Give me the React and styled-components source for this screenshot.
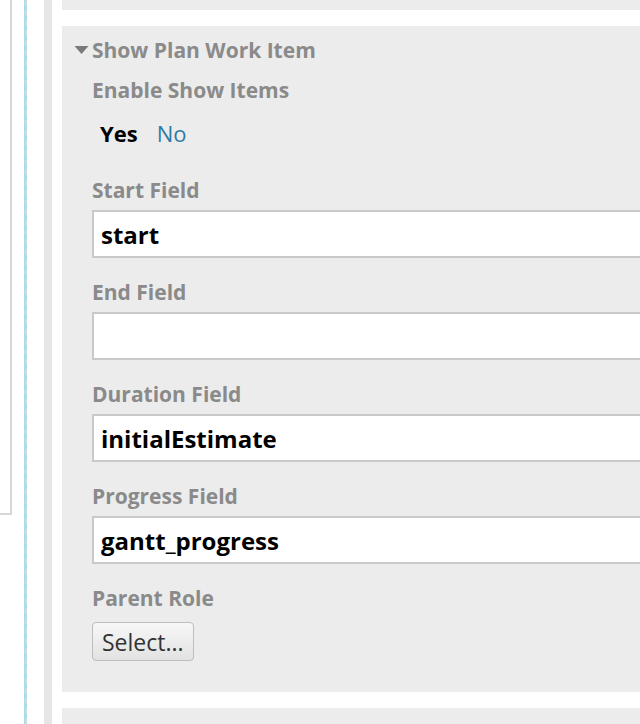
import React, { useState } from "react";
import styled, { createGlobalStyle } from "styled-components";

const GlobalStyle = createGlobalStyle`
  html, body {
    margin: 0;
    padding: 0;
    background: #ffffff;
    overflow: hidden;
  }
  body {
    font-family: "Open Sans", "Noto Sans", sans-serif;
  }
`;

export default function App() {
  const [enabled, setEnabled] = useState(true);

  const fields = [
    { label: "Start Field", value: "start" },
    { label: "End Field", value: "" },
    { label: "Duration Field", value: "initialEstimate" },
    { label: "Progress Field", value: "gantt_progress" },
  ];

  return (
    <>
      <GlobalStyle />
      <Page>
        <LeftColumn>
          <OuterBox />
        </LeftColumn>
        <DashedDivider />
        <Gutter>
          <GutterBar />
        </Gutter>
        <Content>
          <TopPanel />
          <Panel>
            <Header>
              <Caret viewBox="0 0 14 8" aria-hidden="true">
                <path d="M0 0 L14 0 L7 8 Z" fill="#7a7a7a" />
              </Caret>
              Show Plan Work Item
            </Header>
            <Body>
              <Label>Enable Show Items</Label>
              <Toggle>
                <ToggleOption active={enabled} onClick={() => setEnabled(true)}>
                  Yes
                </ToggleOption>
                <ToggleOption active={!enabled} onClick={() => setEnabled(false)}>
                  No
                </ToggleOption>
              </Toggle>
              {fields.map((f) => (
                <Field key={f.label}>
                  <Label>{f.label}</Label>
                  <TextInput defaultValue={f.value} />
                </Field>
              ))}
              <Field>
                <Label>Parent Role</Label>
                <SelectButton>Select...</SelectButton>
              </Field>
            </Body>
          </Panel>
          <BottomPanel />
        </Content>
      </Page>
    </>
  );
}

const Page = styled.div`
  display: flex;
  width: 640px;
  height: 724px;
  overflow: hidden;
`;

const LeftColumn = styled.div`
  width: 24px;
  flex-shrink: 0;
`;

const OuterBox = styled.div`
  width: 10px;
  height: 513px;
  border-right: 2px solid #d6d6d6;
  border-bottom: 2px solid #d6d6d6;
`;

const DashedDivider = styled.div`
  width: 1px;
  flex-shrink: 0;
  background: #a8dcec;
  border-right: 2px dashed #cfd8db;
`;

const Gutter = styled.div`
  display: flex;
  width: 35px;
  flex-shrink: 0;
  padding-left: 17px;
  box-sizing: border-box;
`;

const GutterBar = styled.div`
  width: 8px;
  background: #e6e6e6;
`;

const Content = styled.div`
  display: flex;
  flex-direction: column;
  gap: 16px;
  flex: 1;
  min-width: 0;
`;

const TopPanel = styled.div`
  height: 10px;
  background: #ececec;
`;

const BottomPanel = styled.div`
  flex: 1;
  background: #ececec;
`;

const Panel = styled.div`
  background: #ececec;
  padding: 10px 0 31px 12px;
`;

const Header = styled.div`
  display: flex;
  align-items: center;
  gap: 3px;
  height: 28px;
  font-size: 21px;
  font-weight: 700;
  color: #8a8a8a;
  white-space: nowrap;
`;

const Caret = styled.svg`
  width: 15px;
  height: 8px;
`;

const Body = styled.div`
  padding-left: 18px;
  margin-top: 12px;
`;

const Label = styled.div`
  height: 28px;
  line-height: 28px;
  font-size: 21px;
  font-weight: 700;
  color: #8a8a8a;
  white-space: nowrap;
`;

const Toggle = styled.div`
  display: flex;
  gap: 19px;
  height: 30px;
  align-items: center;
  padding-left: 8px;
  margin: 14px 0 28px;
`;

const ToggleOption = styled.span`
  font-size: 22px;
  font-weight: ${({ active }) => (active ? 700 : 400)};
  color: ${({ active }) => (active ? "#000000" : "#2e7ba6")};
  cursor: pointer;
`;

const Field = styled.div`
  display: flex;
  flex-direction: column;
  align-items: flex-start;
  gap: 6px;
  margin-bottom: 20px;

  &:last-child {
    margin-bottom: 0;
  }
`;

const TextInput = styled.input`
  box-sizing: border-box;
  width: 620px;
  height: 48px;
  border: 2px solid #c9c9c9;
  background: #ffffff;
  padding: 0 7px;
  font-family: inherit;
  font-size: 24px;
  font-weight: 700;
  color: #000000;
  outline: none;
`;

const SelectButton = styled.button`
  box-sizing: border-box;
  height: 39px;
  margin-top: 4px;
  padding: 0 9px;
  border: 1px solid #bdbdbd;
  border-radius: 4px;
  background: linear-gradient(#f7f7f7, #e2e2e2);
  font-family: inherit;
  font-size: 23px;
  color: #333333;
  cursor: pointer;
`;
